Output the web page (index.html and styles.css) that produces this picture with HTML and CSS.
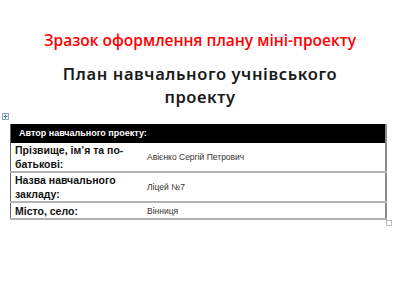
FILE: index.html
```html
<!DOCTYPE html>
<html lang="uk">
<head>
<meta charset="utf-8">
<link rel="stylesheet" href="styles.css">
</head>
<body>
<div class="page">
  <h1 class="red-title">Зразок оформлення плану міні-проекту</h1>
  <h2 class="main-title">План навчального учнівського<br>проекту</h2>
  <div class="table-wrap">
    <span class="move-handle">
      <svg width="7" height="7" viewBox="0 0 7 7"><rect x="0.5" y="0.5" width="6" height="6" fill="#fff" stroke="#8aa6c8"/><path d="M3.5 1.5v4M1.5 3.5h4" stroke="#4f7bb5" stroke-width="1"/></svg>
    </span>
    <table class="plan">
      <tr class="head"><td colspan="2">Автор навчального проекту:</td></tr>
      <tr class="tall"><th>Прізвище, ім’я та по-батькові:</th><td>Авієнко Сергій Петрович</td></tr>
      <tr class="tall"><th>Назва навчального закладу:</th><td>Ліцей №7</td></tr>
      <tr class="short"><th>Місто, село:</th><td>Вінниця</td></tr>
    </table>
    <span class="resize-handle"></span>
  </div>
</div>
</body>
</html>
```
FILE: styles.css
```css
html, body {
  margin: 0;
  padding: 0;
  background: #fff;
}
.page {
  width: 400px;
  height: 300px;
  overflow: hidden;
}
.red-title {
  margin: 29px 0 0 0;
  text-align: center;
  font-family: "Open Sans", sans-serif;
  font-weight: 600;
  font-size: 15.5px;
  line-height: 22px;
  color: #ff0000;
}
.main-title {
  margin: 11px 0 0 0;
  text-align: center;
  font-family: "Noto Sans", sans-serif;
  font-weight: 600;
  font-size: 16.5px;
  line-height: 23px;
  letter-spacing: 0.6px;
  color: #1a1a1a;
}
.table-wrap {
  position: relative;
  margin: 16px 0 0 10px;
  width: 377px;
}
.move-handle {
  position: absolute;
  left: -8px;
  top: -11px;
  line-height: 0;
}
.resize-handle {
  position: absolute;
  right: -5px;
  bottom: -6px;
  width: 4px;
  height: 4px;
  border: 1px solid #bbb;
  background: #fff;
}
.plan {
  width: 377px;
  border-collapse: collapse;
  font-family: "Liberation Sans", Arial, sans-serif;
  border-left: 1px solid #666;
  border-right: 2px solid #8c8c8c;
  border-bottom: 2px solid #b0b0b0;
}
.plan .head td {
  background: #000;
  color: #fff;
  font-weight: bold;
  font-size: 9px;
  height: 19px;
  line-height: 17px;
  padding: 0 0 0 8px;
}
.plan th {
  text-align: left;
  font-weight: bold;
  font-size: 10.5px;
  line-height: 14px;
  color: #111;
  width: 128px;
  padding: 0 0 0 4px;
  vertical-align: middle;
}
.plan td {
  font-size: 8.5px;
  color: #333;
  padding: 0 0 0 4px;
  vertical-align: middle;
}
.plan tr.tall th, .plan tr.tall td {
  height: 26px;
  border-bottom: 2px solid #b4b4b4;
}
.plan tr.short th, .plan tr.short td {
  height: 15px;
}
```
